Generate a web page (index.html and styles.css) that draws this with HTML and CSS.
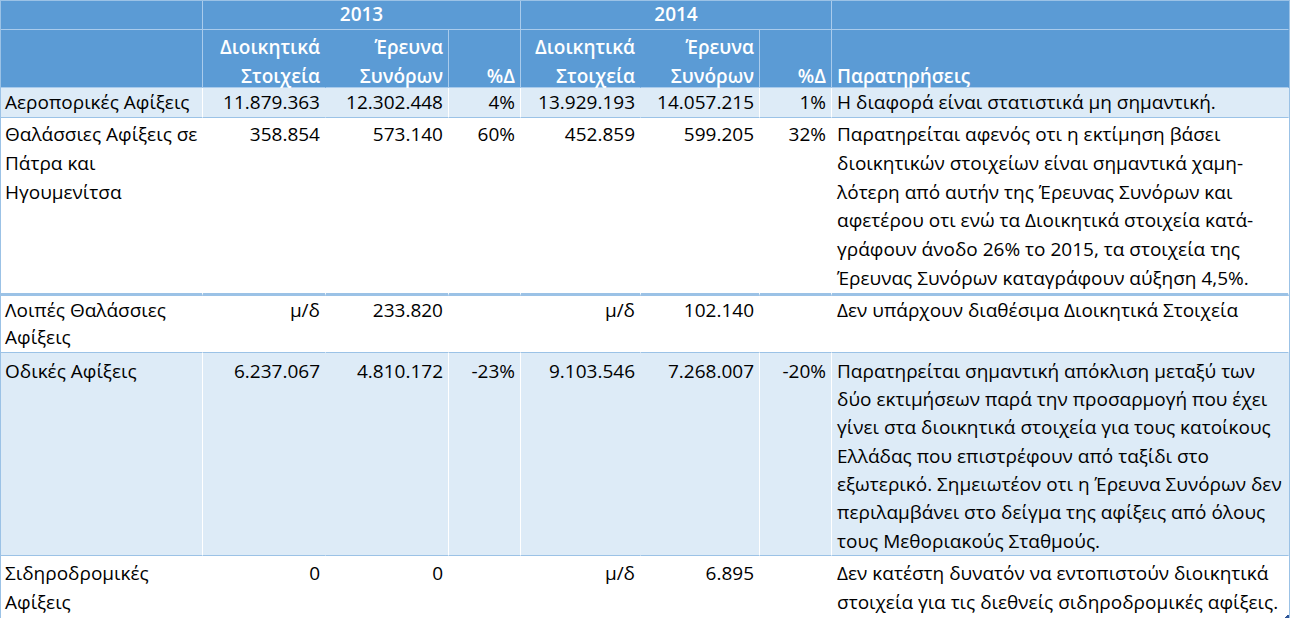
FILE: index.html
```html
<!DOCTYPE html>
<html lang="el">
<head>
<meta charset="utf-8">
<title>Σύγκριση αφίξεων</title>
<link rel="stylesheet" href="styles.css">
</head>
<body>
<div class="wrap">
<table class="grid">
  <colgroup>
    <col class="c-name"><col class="c-num"><col class="c-num2"><col class="c-pct"><col class="c-num3"><col class="c-num4"><col class="c-pct"><col class="c-note">
  </colgroup>
  <thead>
    <tr class="h1">
      <th class="d"></th>
      <th colspan="3" class="yr d">2013</th>
      <th colspan="3" class="yr d">2014</th>
      <th></th>
    </tr>
    <tr class="h2">
      <th class="d"><div class="hd"></div></th>
      <th class="num"><div class="hd">Διοικητικά<br>Στοιχεία</div></th>
      <th class="num d"><div class="hd">Έρευνα<br>Συνόρων</div></th>
      <th class="num d"><div class="hd"><br>%Δ</div></th>
      <th class="num"><div class="hd">Διοικητικά<br>Στοιχεία</div></th>
      <th class="num d"><div class="hd">Έρευνα<br>Συνόρων</div></th>
      <th class="num d"><div class="hd"><br>%Δ</div></th>
      <th class="note"><div class="hd"><br>Παρατηρήσεις</div></th>
    </tr>
  </thead>
  <tbody>
    <tr class="r1 alt">
      <td class="d">Αεροπορικές Αφίξεις</td>
      <td class="num">11.879.363</td>
      <td class="num d">12.302.448</td>
      <td class="num d">4%</td>
      <td class="num">13.929.193</td>
      <td class="num d">14.057.215</td>
      <td class="num d">1%</td>
      <td class="note">Η διαφορά είναι στατιστικά μη σημαντική.</td>
    </tr>
    <tr class="r2">
      <td>Θαλάσσιες Αφίξεις σε<br>Πάτρα και<br>Ηγουμενίτσα</td>
      <td class="num">358.854</td>
      <td class="num">573.140</td>
      <td class="num">60%</td>
      <td class="num">452.859</td>
      <td class="num">599.205</td>
      <td class="num">32%</td>
      <td class="note">Παρατηρείται αφενός οτι η εκτίμηση βάσει<br>διοικητικών στοιχείων είναι σημαντικά χαμη-<br>λότερη από αυτήν της Έρευνας Συνόρων και<br>αφετέρου οτι ενώ τα Διοικητικά στοιχεία κατά-<br>γράφουν άνοδο 26% το 2015, τα στοιχεία της<br>Έρευνας Συνόρων καταγράφουν αύξηση 4,5%.</td>
    </tr>
    <tr class="r3">
      <td>Λοιπές Θαλάσσιες<br>Αφίξεις</td>
      <td class="num">μ/δ</td>
      <td class="num">233.820</td>
      <td class="num"></td>
      <td class="num">μ/δ</td>
      <td class="num">102.140</td>
      <td class="num"></td>
      <td class="note">Δεν υπάρχουν διαθέσιμα Διοικητικά Στοιχεία</td>
    </tr>
    <tr class="r4 alt">
      <td class="d">Οδικές Αφίξεις</td>
      <td class="num">6.237.067</td>
      <td class="num d">4.810.172</td>
      <td class="num d">-23%</td>
      <td class="num">9.103.546</td>
      <td class="num d">7.268.007</td>
      <td class="num d">-20%</td>
      <td class="note">Παρατηρείται σημαντική απόκλιση μεταξύ των<br>δύο εκτιμήσεων παρά την προσαρμογή που έχει<br>γίνει στα διοικητικά στοιχεία για τους κατοίκους<br>Ελλάδας που επιστρέφουν από ταξίδι στο<br>εξωτερικό. Σημειωτέον οτι η Έρευνα Συνόρων δεν<br>περιλαμβάνει στο δείγμα της αφίξεις από όλους<br>τους Μεθοριακούς Σταθμούς.</td>
    </tr>
    <tr class="r5">
      <td>Σιδηροδρομικές<br>Αφίξεις</td>
      <td class="num">0</td>
      <td class="num">0</td>
      <td class="num"></td>
      <td class="num">μ/δ</td>
      <td class="num">6.895</td>
      <td class="num"></td>
      <td class="note">Δεν κατέστη δυνατόν να εντοπιστούν διοικητικά<br>στοιχεία για τις διεθνείς σιδηροδρομικές αφίξεις.</td>
    </tr>
  </tbody>
</table>
<span class="handle"></span>
</div>
</body>
</html>
```
FILE: styles.css
```css
body {
  margin: 0;
  font-family: "Open Sans", "Noto Sans", sans-serif;
  font-size: 19px;
  color: #000;
  background: #fff;
}
.wrap {
  position: relative;
  width: 1290px;
}
.grid {
  border-collapse: separate;
  border-spacing: 0;
  table-layout: fixed;
  width: 1290px;
  border-top: 1px solid #9bc2e6;
  border-left: 1px solid #9bc2e6;
  border-right: 1px solid #9bc2e6;
}
.c-name { width: 202px; }
.c-num { width: 123px; }
.c-num2 { width: 123px; }
.c-pct { width: 72px; }
.c-num3 { width: 120px; }
.c-num4 { width: 119px; }
.c-note { width: 457px; }

.grid th,
.grid td {
  box-sizing: border-box;
  padding: 0 4px;
  vertical-align: top;
  white-space: nowrap;
  text-align: left;
  border-bottom: 1px solid #9bc2e6;
  border-right: 1px solid transparent;
  line-height: 29px;
  font-weight: 400;
}
.grid th {
  background: #5b9bd5;
  color: #fff;
  font-weight: 600;
  border-bottom-color: #a9cbec;
}
.grid th.d { border-right-color: #a9cbec; }
.grid .alt td { background: #ddebf7; }
.grid .alt td.d { border-right-color: #fff; }
.grid .num { text-align: right; padding-right: 5px; }
.grid .yr { text-align: center; }
.grid .note { padding-left: 5px; }

.h1 th { height: 29px; line-height: 27px; }
.h2 th { height: 58px; padding-top: 0; }
.hd {
  height: 57px;
  box-sizing: border-box;
  padding-top: 3px;
  line-height: 29px;
}
.r1 td { height: 30px; padding-top: 0; }
.r2 td { height: 177px; padding-top: 2px; line-height: 28.8px; border-bottom-width: 3px; }
.r3 td { height: 57px; padding-top: 1px; line-height: 27.5px; }
.r4 td { height: 202px; padding-top: 4px; line-height: 28.3px; }
.r5 td { height: 64px; padding-top: 3px; }

.handle {
  position: absolute;
  right: 1px;
  bottom: 2px;
  width: 4px;
  height: 4px;
  background: linear-gradient(135deg, transparent 50%, #2f5597 50%);
}
```
